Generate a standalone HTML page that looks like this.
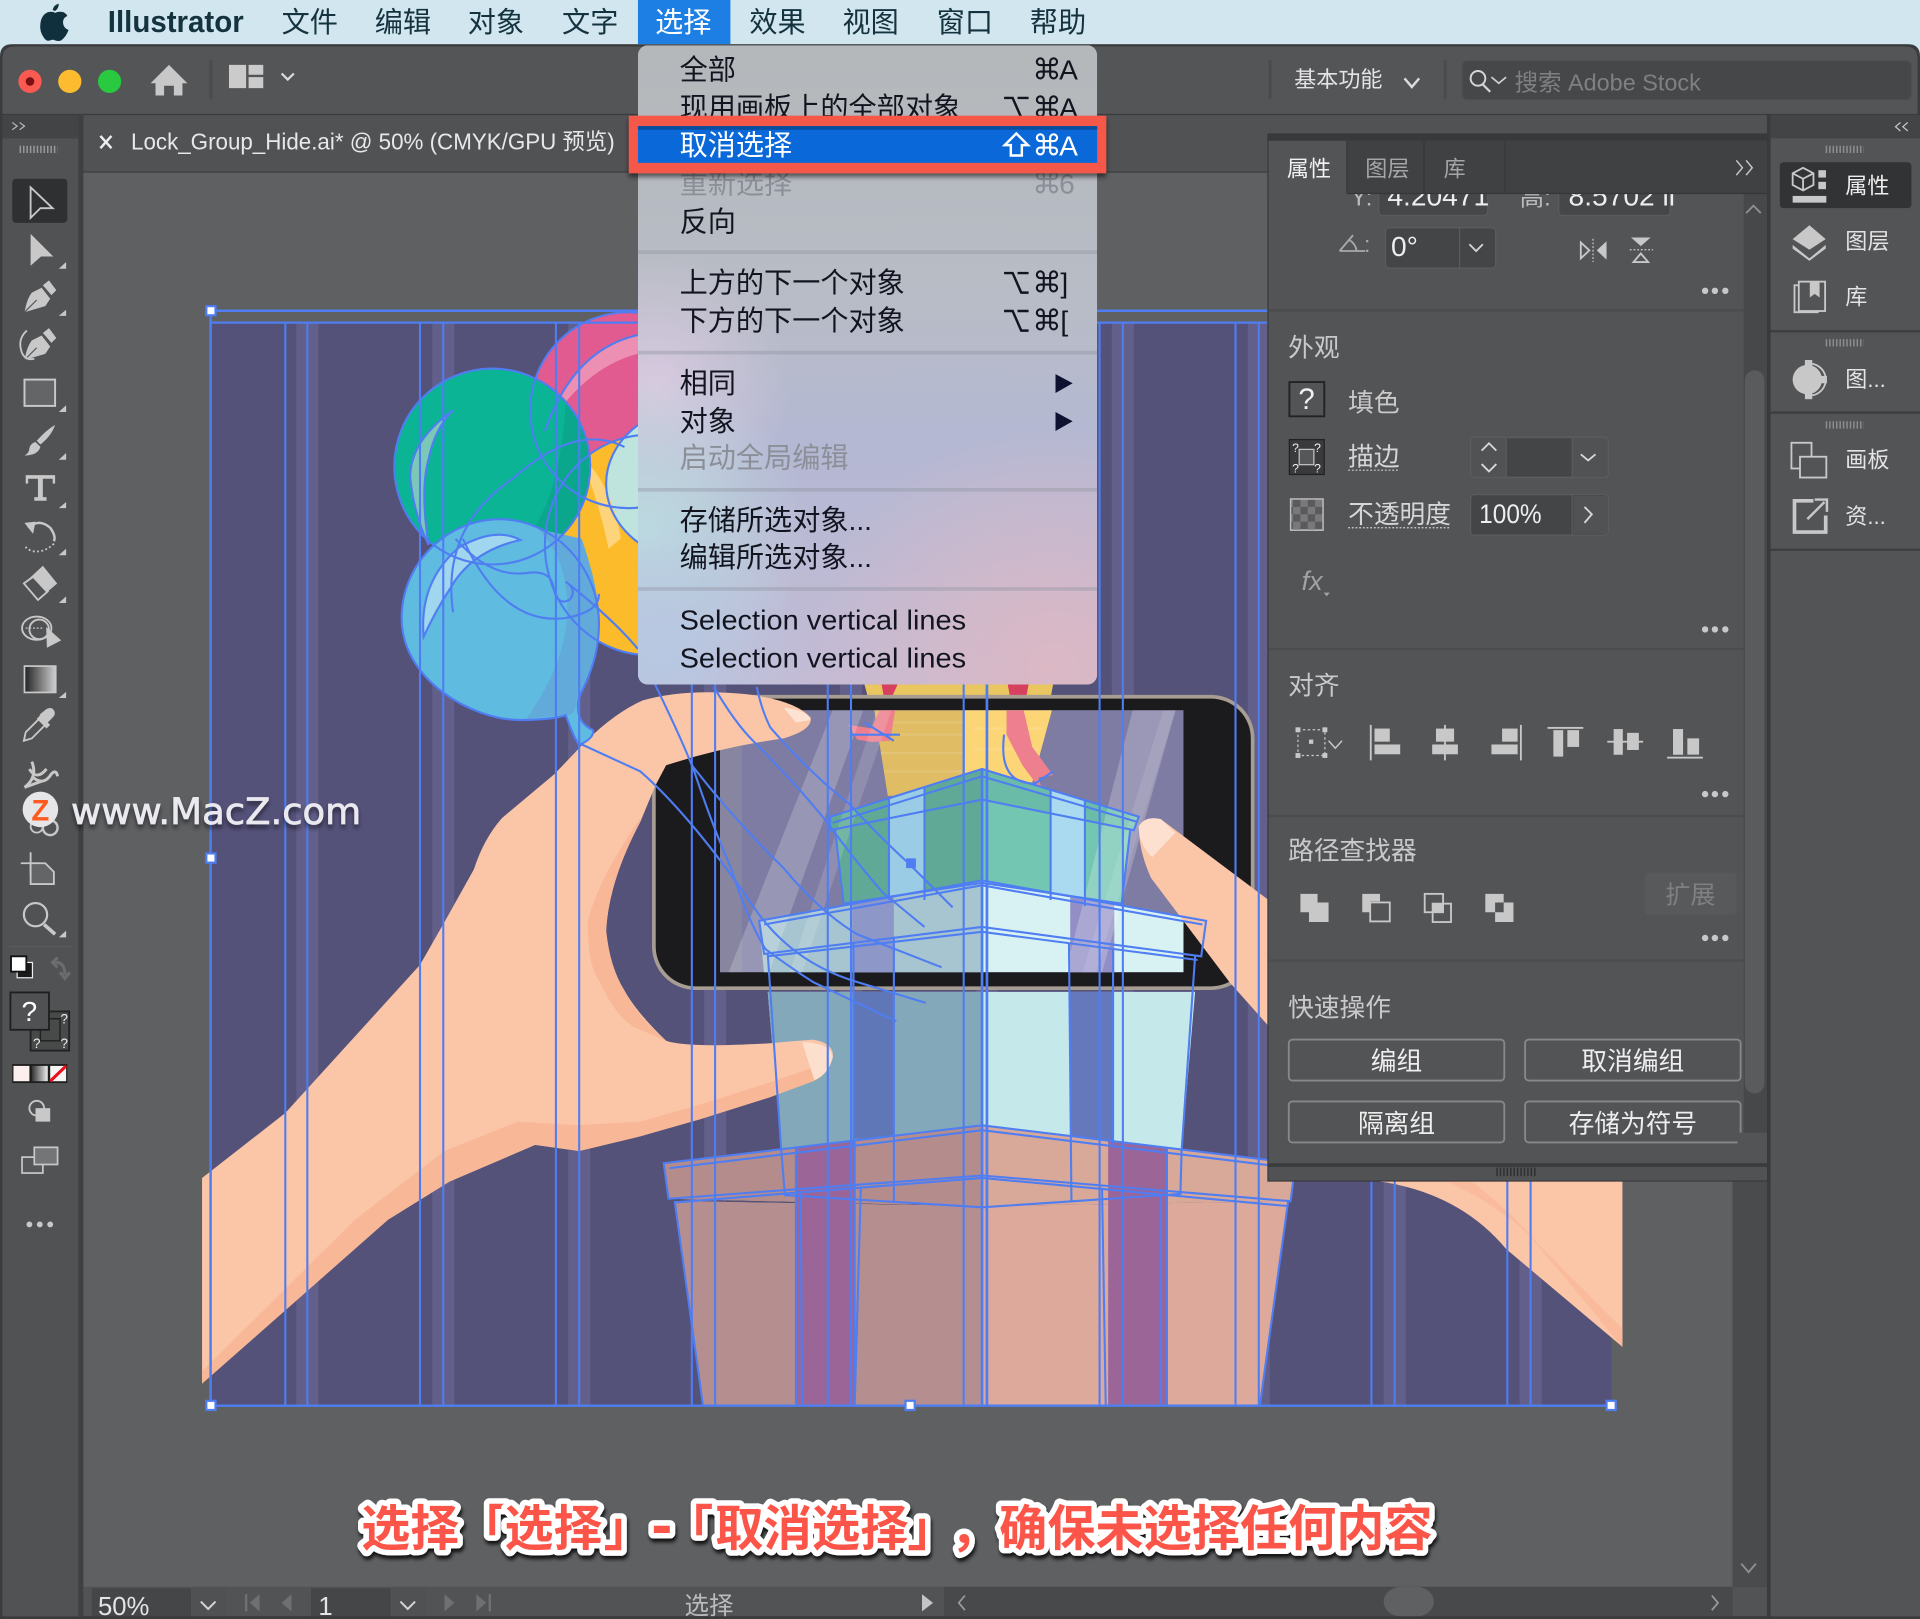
<!DOCTYPE html>
<html lang="zh">
<head>
<meta charset="utf-8">
<title>Illustrator</title>
<style>
html,body{margin:0;padding:0;background:#5f6062;width:1920px;height:1619px;overflow:hidden}
svg{display:block}
text{font-family:"Liberation Sans","Noto Sans CJK SC",sans-serif}
.m{font-size:23px;fill:#15323f}
.mi{font-size:23px;fill:#12151f}
.dis{font-size:23px;fill:#8b8f98}
.sym{font-family:"DejaVu Sans","Liberation Sans",sans-serif;font-size:24px;fill:#12151f}
.opt{fill:none;stroke:#12151f;stroke-width:2}
.h{font-size:21px;fill:#c9c9c9}
.l{font-size:21px;fill:#d6d6d6}
.b{font-size:21px;fill:#eeeeee;text-anchor:middle}
.d{font-size:18px;fill:#e4e4e4}
.ic{fill:#c8c8c8}
.st{fill:none;stroke:#c8c8c8;stroke-width:1.5}
.sel{fill:none;stroke:#4f7df2;stroke-width:1.7}
.cap{font-size:40px;font-weight:700;fill:#fb5548;stroke:#fff;stroke-width:9px;stroke-linejoin:round;paint-order:stroke;font-family:"Liberation Sans","Noto Sans CJK SC",sans-serif}
</style>
</head>
<body>
<svg xmlns="http://www.w3.org/2000/svg" width="1920" height="1619" viewBox="0 0 1568 1322.2" preserveAspectRatio="none">
<defs>
<linearGradient id="mg" x1="0" y1="0" x2="0" y2="1">
<stop offset="0" stop-color="#b4b8ba"/><stop offset=".4" stop-color="#b8bcc6"/><stop offset=".62" stop-color="#b4b8d3"/><stop offset="1" stop-color="#c4bbd5"/>
</linearGradient>
<radialGradient id="rp" gradientUnits="userSpaceOnUse" cx="535" cy="315" r="110"><stop offset="0" stop-color="#d8cadf"/><stop offset="1" stop-color="#d8cadf" stop-opacity="0"/></radialGradient>
<radialGradient id="rt" gradientUnits="userSpaceOnUse" cx="530" cy="435" r="130"><stop offset="0" stop-color="#bcdbe0"/><stop offset="1" stop-color="#bcdbe0" stop-opacity="0"/></radialGradient>
<radialGradient id="rb" gradientUnits="userSpaceOnUse" cx="860" cy="545" r="200"><stop offset="0" stop-color="#dcb8c4"/><stop offset="1" stop-color="#dcb8c4" stop-opacity="0"/></radialGradient>
<radialGradient id="rl" gradientUnits="userSpaceOnUse" cx="540" cy="535" r="120"><stop offset="0" stop-color="#b7c8e2"/><stop offset="1" stop-color="#b7c8e2" stop-opacity="0"/></radialGradient>
<linearGradient id="tg"><stop offset="0" stop-color="#222"/><stop offset="1" stop-color="#cfcfcf"/></linearGradient>
<linearGradient id="sg"><stop offset="0" stop-color="#333"/><stop offset="1" stop-color="#eee"/></linearGradient>
<clipPath id="art"><rect x="160" y="250" width="1165.500" height="898"/></clipPath>
<clipPath id="scr"><rect x="588" y="580" width="378.500" height="214"/></clipPath>
<clipPath id="menu"><rect x="521" y="37" width="375" height="522" rx="8"/></clipPath>
<filter id="sh" x="-5%" y="-20%" width="110%" height="150%"><feDropShadow dx="1" dy="3" stdDeviation="1.5" flood-color="#000" flood-opacity=".8"/></filter>
<filter id="sh2" x="-5%" y="-30%" width="110%" height="170%"><feDropShadow dx="0" dy="3" stdDeviation="2" flood-color="#000" flood-opacity=".55"/></filter>
<pattern id="chk" width="12" height="12" patternUnits="userSpaceOnUse"><rect width="12" height="12" fill="#79797b"/><rect width="6" height="6" fill="#5a5a5c"/><rect x="6" y="6" width="6" height="6" fill="#5a5a5c"/></pattern>
</defs>

<!-- backgrounds -->
<rect width="1568" height="1323" fill="#d1e6ef"/>
<path d="M0 46 Q0 36 10 36 H1558 Q1568 36 1568 46 V1323 H0Z" fill="#3a3b3d"/>
<path d="M2 48 Q2 38 12 38 H1556 Q1566 38 1566 48 V93 H2Z" fill="#545557"/>
<rect x="68" y="94" width="1375" height="47" fill="#515254"/>
<rect x="68" y="140" width="1375" height="1.500" fill="#3c3d3f"/>
<rect x="68" y="141" width="1347" height="1155" fill="#5f6062"/>
<!-- left tool panel -->
<rect x="2" y="94" width="62" height="1228" fill="#515254"/>
<rect x="2" y="94" width="62" height="19" fill="#434446"/>
<rect x="64" y="93" width="4" height="1230" fill="#3f4042"/>

<!-- artwork -->
<g clip-path="url(#art)">
<rect x="172" y="263" width="1144" height="885" fill="#55527a"/>
<g fill="#625f8a">
<rect x="242" y="263" width="18" height="885"/><rect x="353" y="263" width="18" height="885"/><rect x="464" y="263" width="18" height="885"/><rect x="575" y="263" width="18" height="885"/><rect x="686" y="263" width="18" height="885"/><rect x="797" y="263" width="18" height="885"/><rect x="908" y="263" width="18" height="885"/><rect x="1019" y="263" width="18" height="885"/><rect x="1130" y="263" width="18" height="885"/><rect x="1241" y="263" width="18" height="885"/>
</g>
<!-- balloons -->
<circle cx="513" cy="335" r="80" fill="#e25b90"/>
<path d="M445 352 Q470 280 530 272 L530 287 Q480 295 445 352Z" fill="#ec8fb2"/>
<ellipse cx="530" cy="445" rx="85" ry="90" fill="#fcbb2a"/>
<ellipse cx="575" cy="395" rx="80" ry="65" fill="#bfe3dd"/>
<path d="M473 371 Q500 395 507 440 L497 448 Q488 405 473 371Z" fill="#fdd47c"/>
<circle cx="402" cy="381" r="80" fill="#0ab495"/>
<path d="M482 381 A80 80 0 0 1 402 461 Q455 440 462 330 Q482 350 482 381Z" fill="#0aa78d"/>
<path d="M370 335 Q335 360 335 390 Q338 420 350 445 Q343 400 350 375 Q355 350 370 335Z" fill="#7cc8b8"/>
<path d="M408 424 C365 424 328 460 328 505 C328 555 385 588 425 588 C445 588 458 586 462 584 C466 595 470 605 473 608 C480 606 486 600 484 596 C470 590 470 575 475 565 C485 545 490 525 489 505 C487 460 450 424 408 424Z" fill="#5fbbe0"/>
<path d="M475 440 Q489 480 489 505 Q488 540 472 570 Q470 585 462 584 L430 587 Q470 530 462 480 Q460 455 440 432Z" fill="#62aada"/>
<path d="M346 520 Q342 475 375 447 Q405 430 425 441 Q385 450 368 480 Q355 500 346 520Z" fill="#a0d6ee"/>

<!-- right hand bottom -->
<path d="M1120 964 Q1190 972 1230 1020 L1325 1100 V950 H1120Z" fill="#fbc5a7"/>
<path d="M1180 964 Q1225 985 1250 1010 L1325 1100 V1085 L1260 1020 Q1230 985 1200 964Z" fill="#f9bb9c"/>

<!-- box top above phone -->
<path d="M706 559 H860 L858 570 H709Z" fill="#e9c65f"/>
<path d="M720 559 H733 L728 570 H722Z M823 559 H840 L838 570 H825Z" fill="#d8405f"/>

<!-- phone -->
<rect x="534" y="569" width="489" height="238" rx="34" fill="#1b1b1e" stroke="#a79d93" stroke-width="3"/>
<rect x="588" y="580" width="378.500" height="214" fill="#7e7ca2"/>
<g clip-path="url(#scr)">
<rect x="588" y="580" width="18" height="214" fill="#87859f"/>
<path d="M714 580 H859 L840 650 H725Z" fill="#e0bd65"/>
<path d="M787 580 H859 L840 650 H787Z" fill="#fcd676"/>
<path d="M714 590 H787 M716 600 H787 M719 615 H787 M722 630 H787 M795 595 H852 M795 612 H848" stroke="#fff" stroke-opacity=".1" stroke-width="2"/>
<path d="M693 592 L712 595 L718 580 L731 580 L727 605 L712 606 L700 604Z" fill="#ee7f8e"/>
<path d="M822 580 H836 L843 610 L860 633 L848 635 L852 648 L835 625 L822 600Z" fill="#ee7f8e"/>
<!-- green box -->
<path d="M682 678 L801 653 L923 678 L916 738 L801 721 L689 738Z" fill="#73c6b2"/>
<path d="M682 678 L801 653 V721 L689 738Z" fill="#5fa996"/>
<path d="M678 667 L802 628 L930 667 L926 678 L802 653 L678 678Z" fill="#6abba8"/>
<path d="M678 667 L802 628 V653 L678 678Z" fill="#5fa996"/>
<polygon points="726,652 755,643 755,735 726,738" fill="#9bcce6"/>
<polygon points="858,645 886,653 886,740 858,735" fill="#a9daf0"/>
<!-- lid 2 -->
<path d="M620 752 L802 719 L985 752 L981 794 H624Z" fill="#d8f2f4"/>
<path d="M620 752 L802 719 V794 H624Z" fill="#a7c5d0"/>
<polygon points="696,738 730,732 730,795 696,795" fill="#8d97c8"/>
<polygon points="874,733 910,739 910,795 874,795" fill="#938fc6"/>
<!-- light stripes -->
<polygon points="595,794 628,794 705,580 680,580" fill="#fff" opacity=".2"/>
<polygon points="870,794 900,794 960,580 925,580" fill="#fff" opacity=".22"/>
<polygon points="645,794 655,794 728,580 716,580" fill="#fff" opacity=".14"/>
<polygon points="884,794 895,794 960,580 950,580" fill="#fff" opacity=".1"/>
</g>
<!-- tower lower -->
<path d="M627 810 H976 L965 939 L802 919 L638 939Z" fill="#c5e9ea"/>
<path d="M627 810 H802 V919 L638 939Z" fill="#83a8ba"/>
<rect x="697" y="810" width="33" height="120" fill="#6077b7"/>
<rect x="874" y="810" width="35" height="122" fill="#6578bb"/>
<path d="M551 981 L802 985 L1052 981 L1029 1147 H574Z" fill="#dca99b"/>
<path d="M551 981 L802 985 V1147 H574Z" fill="#b58f8f"/>
<path d="M542 950 L802 919 L1058 950 L1054 981 L802 960 L546 979Z" fill="#d8a898"/>
<path d="M542 950 L802 919 V960 L546 979Z" fill="#b48c8c"/>
<path d="M546 979 L802 960 L1054 981 L802 985Z" fill="#d8a898"/>
<path d="M546 979 L802 960 V985Z" fill="#b48c8c"/>
<polygon points="650,937 698,931 698,1147 650,1147" fill="#9b6597"/>
<polygon points="905,931 953,937 953,1147 905,1147" fill="#9b6597"/>

<!-- left hand -->
<path d="M165 962 L233 909 L343 788 L363 753 L387 710 Q395 685 410 668 L453 632 L473 611 Q500 583 525 572 Q560 562 610 567 Q650 572 662 586 Q664 596 640 603 Q590 610 544 625 L535 642 L523 671 Q497 720 495 760 Q498 790 510 809 Q520 827 544 850 Q560 856 629 852 Q650 850 664 849 Q682 852 680 864 Q676 878 664 883 L629 896 L572 914 L523 928 L473 940 L437 935 L367 965 L317 996 L165 1130Z" fill="#fbc5a7"/>
<path d="M165 1130 L165 1120 L290 996 L363 940 L423 916 L473 919 L523 916 L572 902 L629 884 L664 872 L680 862 Q678 876 664 883 L629 896 L572 914 L523 928 L473 940 L437 935 L367 965 L317 996Z" fill="#f8b797"/>
<path d="M523 668 Q487 721 480 753 Q480 790 490 802 Q505 835 523 841 L544 850 Q520 830 510 809 Q498 790 495 760 Q497 720 523 671Z" fill="#f8b797"/>
<path d="M640 578 Q660 580 662 588 L650 590Z" fill="#fde3d4"/>
<path d="M655 851 Q680 852 680 864 Q676 878 665 882Z" fill="#fddfce"/>
<!-- right finger -->
<path d="M930 675 Q935 666 948 669 L1036 735 V838 L1004 802 L940 717 Q930 695 930 675Z" fill="#fbc5a7"/>
<path d="M930 675 Q935 666 948 669 L960 680 L941 700 Q930 690 930 675Z" fill="#fde0cf"/>

<!-- vector outlines -->
<g class="sel">
<path d="M172 263.500 H1316" stroke-width="1.800"/>
<path d="M233 263V1148M251 263V1148M343 263V1148M362 263V1148M454 263V1148M473 263V1148M565 263V1148M584 263V1148M676 263V1148M695 263V1148M787 263V1148M898 263V1148M917 263V1148M1009 263V1148M1028 263V1148M1120 263V1148M1139 263V1148M1231 263V1148M1250 263V1148"/>
<circle cx="513" cy="335" r="80"/><circle cx="402" cy="381" r="80"/>
<ellipse cx="530" cy="445" rx="85" ry="90"/>
<ellipse cx="575" cy="395" rx="80" ry="65"/>
<path d="M370 335 Q335 360 335 390 Q338 420 350 445 Q343 400 350 375 Q355 350 370 335Z"/>
<path d="M408 424 C365 424 328 460 328 505 C328 555 385 588 425 588 C445 588 458 586 462 584 C466 595 470 605 473 608 C480 606 486 600 484 596 C470 590 470 575 475 565 C485 545 490 525 489 505 C487 460 450 424 408 424Z"/>
<path d="M346 520 Q342 475 375 447 Q405 430 425 441 Q385 450 368 480 Q355 500 346 520Z"/>
<path d="M370 500 Q360 430 420 390 Q470 345 510 365"/>
<path d="M372 440 Q400 472 430 468 Q450 465 452 480 Q455 495 465 490 Q472 482 462 475 Q500 505 521 530"/>
<path d="M378 440 Q410 510 460 505 Q490 500 489 485"/>
<path d="M445 352 Q470 280 530 272"/>
<path d="M473 607 L523 630 Q565 667 615 740 Q646 786 700 802 L756 819"/>
<path d="M533 555 Q555 600 565 625 Q600 670 640 709 Q670 745 700 763 L769 790"/>
<path d="M583 561 Q600 590 615 605 Q650 640 675 671 Q700 705 721 729 L755 757"/>
<path d="M618 561 Q622 580 629 594 Q660 630 694 657 Q720 685 742 705 L778 741"/>
<path d="M565 624 Q580 670 597 709 Q610 750 625 775 Q645 790 664 802 L732 834"/>
<path d="M678 667 L802 628 L930 667 L926 678 L802 653 L678 678Z"/>
<path d="M680 672 L802 634 L928 671"/>
<path d="M682 678 L689 738 M923 678 L916 738"/>
<path d="M726 652 V735 M755 643 V735 M858 645 V735 M886 653 V740"/>
<path d="M620 752 L802 719 L985 752 L981 781 L802 757 L624 779Z"/>
<path d="M624 755 L802 723 L982 755 M627 781 L802 761 L978 784"/>
<path d="M689 738 L802 721 L916 738"/>
<path d="M627 779 L638 939 M976 781 L965 939"/>
<path d="M697 770 V937 M730 765 L730 981 M873 770 L875 981 M909 775 L909 935"/>
<path d="M542 950 L802 919 L1058 950 L1054 981 L802 960 L546 979Z"/>
<path d="M547 954 L802 923 L1056 954 M551 982 L802 962 L1052 985"/>
<path d="M551 981 L574 1147 M1052 981 L1029 1147"/>
<path d="M638 939 L641 976 L802 986 L877 981 L964 975 L965 939"/>
<path d="M650 937 V1147 M654 975 L655 1147 M698 931 V1147 M703 970 L698 1147 M900 970 L903 1147 M948 975 V1147 M953 937 V1147"/>
<path d="M787 580 V640"/>
<path d="M802 628 V1148 M806 263 V1148" stroke-width="2.200"/>
<path d="M694 600 L735 600 M706 590 L730 605 M820 600 Q815 640 845 640 L860 630"/>
</g>
</g>
<path d="M172 253.800 H1316 M172 253.800 V1148 M172 1148 H1316" fill="none" stroke="#4f7df2" stroke-width="2"/>
<g fill="#fff" stroke="#4f7df2" stroke-width="1.800">
<rect x="168.500" y="250" width="7.500" height="7.500"/><rect x="168.500" y="697" width="7.500" height="7.500"/><rect x="168.500" y="1144" width="7.500" height="7.500"/><rect x="739.500" y="1144" width="7.500" height="7.500"/><rect x="1312" y="1144" width="7.500" height="7.500"/>
</g>
<rect x="740" y="701" width="8" height="8" fill="#4f7df2"/>

<!-- right side dark scrollbar -->
<rect x="1415" y="141" width="28" height="1155" fill="#4a4b4d"/>
<path d="M1422 1277 L1428 1284 L1434 1277" class="st" style="stroke:#8f9092"/>
<!-- bottom bar -->
<rect x="68" y="1296" width="1375" height="24" fill="#525355"/>
<rect x="771" y="1296" width="644" height="24" fill="#48494b"/>
<rect x="75" y="1297" width="81" height="23" fill="#454648"/>
<rect x="157" y="1297" width="28" height="23" fill="#505153"/>
<rect x="254" y="1297" width="65" height="23" fill="#454648"/>
<rect x="320" y="1297" width="28" height="23" fill="#505153"/>
<rect x="1130" y="1296" width="41" height="24" rx="14" fill="#5f6062"/>
<text x="80" y="1319" font-size="21" fill="#e4e4e4">50%</text>
<path d="M164 1308 L170 1314 L176 1308M327 1308 L333 1314 L339 1308" fill="none" stroke="#d5d5d5" stroke-width="1.600"/>
<text x="260" y="1319" font-size="21" fill="#e4e4e4">1</text>
<g fill="#6f7072">
<rect x="200" y="1302" width="2" height="14"/><polygon points="212,1302 212,1316 204,1309"/><polygon points="238,1302 238,1316 230,1309"/>
<polygon points="363,1302 363,1316 371,1309"/><polygon points="389,1302 389,1316 397,1309"/><rect x="399" y="1302" width="2" height="14"/>
</g>
<text x="579" y="1318" font-size="20" fill="#bcbcbc" text-anchor="middle">选择</text>
<polygon points="753,1302 753,1316 762,1309" fill="#c5c5c5"/>
<path d="M788 1303 L783 1309 L788 1315M1398 1303 L1403 1309 L1398 1315" fill="none" stroke="#9a9b9d" stroke-width="1.400"/>
<rect x="0" y="1320" width="1568" height="3" fill="#3a3b3d"/>

<!-- top toolbar -->
<circle cx="24.500" cy="66.500" r="9.500" fill="#fb5a52"/><circle cx="24.500" cy="66.500" r="3.500" fill="#7a1010"/>
<circle cx="57" cy="66.500" r="9.500" fill="#fdbb30"/><circle cx="89.500" cy="66.500" r="9.500" fill="#29c940"/>
<path d="M138 53 L153 68 L149 68 V78 H142 V70 H134 V78 H127 V68 L123 68Z" fill="#c8c8c8"/>
<rect x="171" y="49" width="2.500" height="32" fill="#4a4b4d"/>
<path d="M187 53 H201 V72 H187Z M203 53 H215 V61 H203Z M203 63 H215 V72 H203Z" fill="#cbcbcb"/>
<path d="M230 60 L235 65 L240 60" fill="none" stroke="#dcdcdc" stroke-width="1.800"/>
<rect x="1036" y="49" width="2.500" height="32" fill="#4a4b4d"/><rect x="1179" y="49" width="2.500" height="32" fill="#4a4b4d"/>
<text x="1057" y="71" class="d">基本功能</text>
<path d="M1147 64 L1153 71 L1159 64" fill="none" stroke="#dcdcdc" stroke-width="2"/>
<rect x="1194" y="49.500" width="367" height="32" rx="4" fill="#464749" stroke="#4f5052"/>
<circle cx="1207" cy="64" r="6" fill="none" stroke="#d5d5d5" stroke-width="1.600"/><path d="M1211 69 L1217 75" stroke="#d5d5d5" stroke-width="1.800"/>
<path d="M1218 63 L1224 68 L1230 63" fill="none" stroke="#d0d0d0" stroke-width="1.400"/>
<text x="1237" y="74" font-size="19" fill="#7f8082" textLength="152" lengthAdjust="spacingAndGlyphs">搜索 Adobe Stock</text>

<!-- tab -->
<path d="M82 111 L91 121 M91 111 L82 121" stroke="#eee" stroke-width="2"/>
<text x="107" y="122" font-size="18.500" fill="#e8e8e8" textLength="395" lengthAdjust="spacingAndGlyphs">Lock_Group_Hide.ai* @ 50% (CMYK/GPU 预览)</text>

<!-- left tools -->
<path d="M10 106 L14 103 L10 100 M16 106 L20 103 L16 100" fill="none" stroke="#b9b9b9"/>
<path d="M16 122 H47" stroke="#9a9a9a" stroke-width="6" stroke-dasharray="1.200 1.600"/>
<rect x="10" y="146" width="45" height="36" rx="3" fill="#2f3032"/>
<path d="M25 153 L43 170 L33 170 L25 178Z" class="st"/>
<path d="M25 191 L43.500 209.500 L33.500 209.500 L25 217Z" class="ic"/>
<path d="M20 255 Q22 244 26 239 L34 235 L41 244 L37 250 Q30 252 20 255Z" class="ic"/><path d="M35 233 L40 229 L46 237 L42 241Z" class="ic"/><path d="M20 255 L30 245" stroke="#535456"/>
<g transform="translate(0,39)"><path d="M20 255 Q22 244 26 239 L34 235 L41 244 L37 250 Q30 252 20 255Z" class="ic"/><path d="M35 233 L40 229 L46 237 L42 241Z" class="ic"/><path d="M20 255 L30 245" stroke="#535456"/></g>
<path d="M22 270 Q15 276 17 285 Q19 295 28 293" class="st"/>
<rect x="20" y="310" width="25" height="21.500" fill="#646567" stroke="#c8c8c8" stroke-width="1.600"/>
<path d="M45 347 Q42 356 33 363 L30 360 Q38 351 45 347Z" class="ic"/><path d="M29 361 L33 365 Q31 372 20 372 Q24 370 24 366 Q25 362 29 361Z" class="ic"/>
<path d="M21 388 H45 V395 H43 V391 H35 V406 H38 V409 H28 V406 H31 V391 H23 V395 H21Z" class="ic"/>
<path d="M23 431 Q32 423 41 431 Q46 438 44 442" fill="none" stroke="#c8c8c8" stroke-width="2"/><polygon points="20,427 29,426 27,436" class="ic"/>
<path d="M44 444 Q36 452 26 450 Q21 448 20 445" class="st" stroke-dasharray="1.500 2"/>
<path d="M19.500 476.500 L35 462 L46.700 476.500 L38 484 L27 472Z" class="ic"/><path d="M19.500 476.500 L31 490 L39 483 L27 471Z" class="st"/>
<ellipse cx="30" cy="513" rx="12" ry="9.500" class="st"/><circle cx="32" cy="514" r="8" class="st" stroke-width="1"/><path d="M21 513 H36" stroke="#c8c8c8" stroke-dasharray="1.500 1.500"/><polygon points="37.700,512 50,523 38.300,529" class="ic"/>
<rect x="20" y="544" width="25.500" height="21.500" fill="url(#tg)" stroke="#c8c8c8" stroke-width="1.400"/>
<path d="M19.500 605 L21 598 L33 586 L38 591 L26 603Z" class="st"/><path d="M33 583 L38 579 Q42 577 44 580 Q46 583 43 586 L39 590 L41 592 L38 595 L30 587 L32 585Z" class="ic"/>
<path d="M20 643 Q31 635 26 622 M27 635 Q36 642 42 632 Q46 628 47 634 M24 628 Q30 638 38 628 M20 643 L34 638" fill="none" stroke="#c8c8c8" stroke-width="2.400"/>
<circle cx="41" cy="676" r="6" class="st" style="stroke-width:2"/><circle cx="30" cy="675" r="5" class="st"/>
<path d="M17 705 H33 M25 696 V714" class="st"/><path d="M25 705 H37 L44 712 V722 H25Z" fill="#646567" stroke="#c8c8c8" stroke-width="1.500"/>
<circle cx="29" cy="747" r="9.500" class="st" style="stroke-width:1.800"/><path d="M36 755 L45 763" stroke="#c8c8c8" stroke-width="3"/>
<g class="ic"><polygon points="54,214 54,219.500 48,219.500"/><polygon points="54,253 54,258 48,258"/><polygon points="54,331 54,336.500 48,336.500"/><polygon points="54,370 54,375.500 48,375.500"/><polygon points="54,410 54,415 48,415"/><polygon points="54,448 54,453.500 48,453.500"/><polygon points="54,487 54,492.500 48,492.500"/><polygon points="54,565 54,570 48,570"/><polygon points="54,760 54,765.500 48,765.500"/></g>
<path d="M8 773 H58" stroke="#5a5b5d"/>
<rect x="14" y="786" width="12.500" height="12.500" fill="#1a1a1a" stroke="#eee"/><rect x="9" y="781" width="12.500" height="12.500" fill="#fff" stroke="#111" stroke-width="1.500"/>
<path d="M44 786 Q53 785 53 796 M47 782 L43 786 L47 790 M49 794 L53 799 L57 794" fill="none" stroke="#6b6c6e" stroke-width="2.600"/>
<rect x="25" y="826" width="31.500" height="32" fill="#484949" stroke="#222" stroke-width="1.500"/>
<rect x="33" y="832" width="16" height="18" fill="none" stroke="#222" stroke-width="1.200"/>
<rect x="8.500" y="810.500" width="31.500" height="30.500" fill="#505153" stroke="#1f1f1f" stroke-width="1.500"/>
<text x="24" y="834" font-size="23" fill="#fff" text-anchor="middle">?</text>
<text x="52.500" y="836" font-size="11" fill="#eee" text-anchor="middle">?</text><text x="30" y="856" font-size="11" fill="#eee" text-anchor="middle">?</text><text x="52.500" y="856" font-size="11" fill="#eee" text-anchor="middle">?</text>
<rect x="10" y="869" width="45" height="15.500" fill="#1e1e1e"/>
<rect x="11" y="870.500" width="13" height="12.500" fill="#fbf0ee"/><rect x="26" y="870.500" width="13" height="12.500" fill="url(#sg)"/><rect x="41" y="870.500" width="13" height="12.500" fill="#f5f5f5"/>
<path d="M41 883 L54 870.500" stroke="#e8101a" stroke-width="2.500"/>
<circle cx="30" cy="905" r="6" class="st"/><rect x="29" y="905" width="12" height="11" class="ic"/>
<rect x="18" y="945" width="17" height="13" fill="#56575a" stroke="#c8c8c8" stroke-width="1.400"/><rect x="28" y="937" width="19" height="14" fill="#747577" stroke="#c8c8c8" stroke-width="1.400"/>
<circle cx="24" cy="1000" r="2.400" fill="#c8c8c8"/><circle cx="32.500" cy="1000" r="2.400" fill="#c8c8c8"/><circle cx="41" cy="1000" r="2.400" fill="#c8c8c8"/>

<!-- watermark -->
<circle cx="33" cy="661" r="14.500" fill="#e6e6e8"/>
<text x="33" y="670" font-size="24" font-weight="700" fill="#ff5a20" text-anchor="middle">Z</text>
<text x="58" y="673" font-size="30" fill="#e9e9ef" stroke="#e9e9ef" stroke-width=".6" style="font-family:'DejaVu Sans',sans-serif" textLength="237" lengthAdjust="spacingAndGlyphs" filter="url(#sh2)">www.MacZ.com</text>

<!-- right dock -->
<rect x="1443" y="93" width="3" height="1230" fill="#3a3b3d"/>
<rect x="1446" y="94" width="122" height="1226" fill="#535456"/>
<rect x="1446" y="94" width="122" height="19" fill="#434446"/>
<path d="M1552 100 L1548 103.500 L1552 107 M1558 100 L1554 103.500 L1558 107" fill="none" stroke="#c8c8c8"/>
<path d="M1491 122 H1522M1491 280 H1522M1491 347 H1522" stroke="#8e8e8e" stroke-width="6" stroke-dasharray="1.200 1.600"/>
<rect x="1453.500" y="132.500" width="107.500" height="37.500" rx="3" fill="#323335"/>
<path d="M1472.500 137 L1481 141.500 V151 L1472.500 155.500 L1464 151 V141.500Z M1464 141.500 L1472.500 146 L1481 141.500 M1472.500 146 V155.500" class="st"/>
<rect x="1485" y="139" width="6.200" height="6" class="ic"/><rect x="1485" y="148.500" width="6.200" height="6" class="ic"/><rect x="1464" y="160" width="27.500" height="5.500" class="ic"/>
<text x="1507" y="158" font-size="18" fill="#eee">属性</text>
<path d="M1477.700 184 L1491 195.300 L1477.700 204 L1464 195.300Z" class="ic"/><path d="M1464 200 L1477.700 211 L1491 200 L1491 203 L1477.700 213 L1464 203Z" class="ic"/>
<text x="1507" y="203.500" font-size="18" fill="#e4e4e4">图层</text>
<rect x="1465.500" y="233" width="19" height="22" class="st"/><rect x="1469" y="230" width="21.500" height="24" fill="#535456" stroke="#c8c8c8" stroke-width="1.500"/><path d="M1478 230 V243 L1482 240 L1486 243 V230Z" class="ic"/>
<text x="1507" y="248.500" font-size="18" fill="#e4e4e4">库</text>
<path d="M1446 270.500 H1568M1446 337 H1568M1446 449 H1568" stroke="#3e3f41" stroke-width="2"/>
<circle cx="1476" cy="310" r="12" class="ic"/><path d="M1478 297 A13 13 0 0 1 1478 323" class="st"/><rect x="1474" y="294" width="6" height="6" class="ic"/><rect x="1474" y="320" width="6" height="6" class="ic"/><rect x="1487" y="307" width="5" height="6" class="ic"/>
<text x="1507" y="316" font-size="18" fill="#e4e4e4">图...</text>
<rect x="1463" y="361.600" width="16.400" height="21" class="st"/><rect x="1470" y="373" width="21.500" height="17" fill="#535456" stroke="#c8c8c8" stroke-width="1.500"/>
<text x="1507" y="382" font-size="18" fill="#e4e4e4">画板</text>
<path d="M1481 409 H1465.500 V434.500 H1491 V421" fill="none" stroke="#c8c8c8" stroke-width="3"/><path d="M1476 424 L1490 410 M1482 408 H1492 V418" fill="none" stroke="#c8c8c8" stroke-width="2"/>
<text x="1507" y="428" font-size="18" fill="#e4e4e4">资...</text>

<!-- properties panel -->
<rect x="1035" y="109" width="409" height="856" fill="#38393b"/>
<rect x="1036" y="115" width="407" height="849" fill="#535456"/>
<rect x="1424" y="158" width="19" height="770" fill="#47484a"/>
<rect x="1425" y="302.500" width="16" height="590.500" rx="8" fill="#5a5b5d"/>
<path d="M1426 174 L1432 168 L1438 174" fill="none" stroke="#8e8f91" stroke-width="1.500"/>
<!-- clipped fields -->
<rect x="1126" y="150" width="89" height="26" rx="3" fill="#464749" stroke="#5a5b5d"/><rect x="1273" y="150" width="91" height="26" rx="3" fill="#464749" stroke="#5a5b5d"/>
<text x="1133" y="168" font-size="23" fill="#eee">4.20471</text><text x="1281" y="168" font-size="23" fill="#eee">8.5702 ii</text>
<text x="1103" y="168" font-size="20" fill="#bbb">Y:</text><text x="1241" y="168" font-size="20" fill="#bbb">高:</text>
<!-- tabs -->
<rect x="1036" y="115" width="407" height="43" fill="#404143"/>
<rect x="1036" y="115" width="64" height="45" fill="#535456"/>
<path d="M1100 115 V158 M1163 115 V158 M1229 115 V158" stroke="#36373a"/>
<path d="M1100 158 H1443" stroke="#36373a"/>
<text x="1051" y="144" font-size="18" fill="#f2f2f2">属性</text>
<text x="1115" y="144" font-size="18" fill="#a6a6a6">图层</text>
<text x="1179" y="144" font-size="18" fill="#a6a6a6">库</text>
<path d="M1418 131 L1423 137 L1418 143 M1426 131 L1431 137 L1426 143" fill="none" stroke="#c4c4c4" stroke-width="1.200"/>

<path d="M1094 205 L1105 192 M1094 205 H1115 M1102 196 Q1107 199 1108 205" fill="none" stroke="#a9a9a9" stroke-width="1.500"/><text x="1114" y="206" font-size="18" fill="#aaa">:</text>
<rect x="1131.500" y="186" width="90" height="33" rx="3" fill="#444547" stroke="#5b5c5e"/><path d="M1192 186 V219" stroke="#5b5c5e"/>
<text x="1136" y="209" font-size="23" fill="#eee">0°</text>
<path d="M1200 199.500 L1205.500 205 L1211 199.500" fill="none" stroke="#d5d5d5" stroke-width="1.500"/>
<path d="M1291 198 V211 L1298 204.500Z" class="st"/><path d="M1301 195 V214" stroke="#c8c8c8" stroke-dasharray="1.500 1.500"/><polygon points="1312,197 1312,212 1304,204.500" class="ic"/>
<polygon points="1332,194 1348,194 1340,201" class="ic"/><path d="M1331 204 H1350" stroke="#c8c8c8" stroke-dasharray="1.500 1.500"/><path d="M1334 214 H1346 L1340 207Z" class="st"/>
<g class="ic"><circle cx="1392.500" cy="237.500" r="2.600"/><circle cx="1400.500" cy="237.500" r="2.600"/><circle cx="1409" cy="237.500" r="2.600"/>
<circle cx="1392.500" cy="514" r="2.600"/><circle cx="1400.500" cy="514" r="2.600"/><circle cx="1409" cy="514" r="2.600"/>
<circle cx="1392.500" cy="648.500" r="2.600"/><circle cx="1400.500" cy="648.500" r="2.600"/><circle cx="1409" cy="648.500" r="2.600"/>
<circle cx="1392.500" cy="766" r="2.600"/><circle cx="1400.500" cy="766" r="2.600"/><circle cx="1409" cy="766" r="2.600"/></g>
<path d="M1036 253.500 H1424 M1036 530 H1424 M1036 666.500 H1424 M1036 784.500 H1424" stroke="#4b4c4e" stroke-width="2"/>

<text x="1052" y="291" class="h">外观</text>
<rect x="1053" y="312" width="28.500" height="28" fill="none" stroke="#222" stroke-width="1.500"/>
<text x="1067" y="334" font-size="24" fill="#f0f0f0" text-anchor="middle">?</text>
<text x="1101" y="336" class="h">填色</text>
<rect x="1053" y="359" width="28.500" height="28.500" fill="#3a3a3c" stroke="#222"/>
<rect x="1061" y="367" width="12" height="12.500" fill="#565759" stroke="#c5c5c5" stroke-width="1"/>
<g font-size="10" fill="#eee" text-anchor="middle"><text x="1058" y="369">?</text><text x="1076" y="369">?</text><text x="1058" y="386">?</text><text x="1076" y="386">?</text></g>
<text x="1101" y="380" class="l">描边</text><path d="M1101 384 H1143" stroke="#d0d0d0" stroke-dasharray="1.500 1.500"/>
<rect x="1201" y="357" width="112.500" height="33" rx="3" fill="#515254" stroke="#5b5c5e"/><rect x="1230" y="358" width="54" height="31" fill="#444547"/><path d="M1230 357 V390 M1284 357 V390" stroke="#5b5c5e"/>
<path d="M1210 368 L1216 362 L1222 368 M1210 379 L1216 385 L1222 379 M1291 371 L1297 376 L1303 371" fill="none" stroke="#d8d8d8" stroke-width="1.500"/>
<rect x="1054" y="407.500" width="26.500" height="25.500" fill="url(#chk)" stroke="#bdbdbd" stroke-width="1.200"/>
<text x="1101" y="427" class="l">不透明度</text><path d="M1101 431 H1185" stroke="#d0d0d0" stroke-dasharray="1.500 1.500"/>
<rect x="1201" y="404" width="112.500" height="33" rx="3" fill="#444547" stroke="#5b5c5e"/><path d="M1284 404 V437" stroke="#5b5c5e"/><rect x="1285" y="405" width="28" height="31" fill="#515254"/>
<text x="1208" y="427" font-size="22" fill="#eee" textLength="51" lengthAdjust="spacingAndGlyphs">100%</text>
<path d="M1294 414 L1300 420 L1294 427" fill="none" stroke="#d8d8d8" stroke-width="1.500"/>
<text x="1063" y="482" font-size="22" font-style="italic" fill="#a2a2a2">fx</text><path d="M1081 484 L1086 484 L1083.500 487Z" fill="#a2a2a2"/>

<text x="1052" y="567" class="h">对齐</text>
<rect x="1060" y="596" width="22" height="21" fill="none" stroke="#c8c8c8" stroke-dasharray="2 2"/><rect x="1069" y="604" width="3.500" height="3.500" class="ic"/>
<g class="ic"><rect x="1058" y="594" width="4" height="4"/><rect x="1080" y="594" width="4" height="4"/><rect x="1058" y="615" width="4" height="4"/><rect x="1080" y="615" width="4" height="4"/></g>
<path d="M1085 605 L1090.500 611 L1096 605" fill="none" stroke="#c8c8c8" stroke-width="1.200"/>
<g class="ic">
<rect x="1118.700" y="592" width="1.500" height="29"/><rect x="1122.500" y="595" width="12.500" height="10.700"/><rect x="1122.500" y="608" width="21" height="8"/>
<rect x="1179.300" y="592" width="1.500" height="29"/><rect x="1172.700" y="595" width="14.800" height="10.700"/><rect x="1169.600" y="608" width="21" height="8"/>
<rect x="1241.300" y="592" width="1.500" height="29"/><rect x="1226.700" y="595" width="12.700" height="10.700"/><rect x="1218" y="608" width="21.400" height="8"/>
<rect x="1263.800" y="593.700" width="29.200" height="1.500"/><rect x="1268.600" y="596.300" width="8" height="21.600"/><rect x="1280" y="596.300" width="9.600" height="13.700"/>
<rect x="1312.600" y="605" width="29.300" height="1.500"/><rect x="1317.800" y="595.400" width="7.500" height="21"/><rect x="1328.800" y="598.500" width="9.600" height="14"/>
<rect x="1361.500" y="618" width="29.200" height="1.500"/><rect x="1366.300" y="595.400" width="8.200" height="21"/><rect x="1378" y="603" width="9.600" height="13.300"/>
</g>

<text x="1052" y="702" class="h">路径查找器</text>
<path d="M1062 730 H1076 V737 H1085 V753 H1069 V745 H1062Z" class="ic"/>
<path d="M1112.500 730 H1127 V736 H1119 V745 H1112.500Z" class="ic"/><rect x="1119" y="737" width="16" height="15.500" class="st"/>
<rect x="1163.500" y="730" width="15" height="15" class="st"/><rect x="1170" y="738" width="15" height="15" class="st"/><rect x="1170" y="738" width="8.500" height="7" class="ic"/>
<path d="M1213 730 H1228 V737 H1236 V753 H1221 V745 H1213Z M1221 737 V745 H1228 V737Z" fill-rule="evenodd" class="ic"/>
<rect x="1343.500" y="712.500" width="74.500" height="34.500" rx="3" fill="#58595b"/>
<text x="1380.500" y="738" font-size="20.500" fill="#7f8082" text-anchor="middle">扩展</text>

<text x="1052" y="830" class="h">快速操作</text>
<g fill="none" stroke="#87888a" stroke-width="1.500">
<rect x="1052.500" y="849" width="176" height="33.500" rx="3"/><rect x="1245.500" y="849" width="176" height="33.500" rx="3"/>
<rect x="1052.500" y="899.500" width="176" height="33.500" rx="3"/><rect x="1245.500" y="899.500" width="176" height="33.500" rx="3"/>
</g>
<text x="1140.500" y="874" class="b">编组</text><text x="1333.500" y="874" class="b">取消编组</text>
<text x="1140.500" y="925" class="b">隔离组</text><text x="1333.500" y="925" class="b">存储为符号</text>
<rect x="1419" y="925" width="24" height="25" fill="#535456"/>
<rect x="1036" y="950" width="407" height="3" fill="#3a3b3d"/>
<rect x="1036" y="953" width="407" height="10" fill="#515254"/>
<path d="M1222 957 H1254" stroke="#2f3032" stroke-width="7" stroke-dasharray="1.200 1.600"/>

<!-- top menubar -->
<rect x="0" y="0" width="1568" height="36" fill="#d1e6ef"/>
<path d="M43 8 Q44 4 48 3 Q48 7 45 9 Q44 9 43 8Z M39 10 Q43 9 45 10.500 Q48 9 52 10 Q54 11 55 13 Q51 15 51.500 19 Q52 23 56 24.500 Q54 30 50 33 Q48 34 45 33 Q43 32 41 33 Q38 34 36 31 Q32 26 33 19 Q34 12 39 10Z" fill="#11303d"/>
<text x="88" y="26" font-size="25" font-weight="700" fill="#15323f" textLength="111" lengthAdjust="spacingAndGlyphs">Illustrator</text>
<text x="230" y="26" class="m">文件</text><text x="306" y="26" class="m">编辑</text><text x="382" y="26" class="m">对象</text><text x="459" y="26" class="m">文字</text>
<rect x="521" y="0" width="75.500" height="36" fill="#1d7fe3"/>
<text x="535" y="26" class="m" style="fill:#fff">选择</text>
<text x="612" y="26" class="m">效果</text><text x="688" y="26" class="m">视图</text><text x="765" y="26" class="m">窗口</text><text x="841" y="26" class="m">帮助</text>

<!-- dropdown menu -->
<g clip-path="url(#menu)">
<rect x="521" y="37" width="375" height="522" fill="url(#mg)"/>
<rect x="521" y="37" width="375" height="522" fill="url(#rp)"/>
<rect x="521" y="37" width="375" height="522" fill="url(#rt)"/>
<rect x="521" y="37" width="375" height="522" fill="url(#rb)"/>
<rect x="521" y="37" width="375" height="522" fill="url(#rl)"/>
<path d="M521 206 H896 M521 288 H896 M521 400 H896 M521 481 H896" stroke="#8f93a0" stroke-opacity=".4" stroke-width="3"/>
<text x="555" y="65" class="mi">全部</text>
<text x="843" y="65" class="sym">⌘</text><text x="865" y="65" class="mi">A</text>
<text x="555" y="96" class="mi">现用画板上的全部对象</text>
<path d="M820 80 H827 L834 96 H840 M831 80 H840" class="opt"/><text x="843" y="96" class="sym">⌘</text><text x="865" y="96" class="mi">A</text>
<text x="555" y="158" class="dis">重新选择</text>
<text x="843" y="158" class="sym" style="fill:#8b8f98">⌘</text><text x="865" y="158" class="dis">6</text>
<text x="555" y="189" class="mi">反向</text>
<text x="555" y="239" class="mi">上方的下一个对象</text>
<path d="M820 223 H827 L834 239 H840 M831 223 H840" class="opt"/><text x="843" y="239" class="sym">⌘</text><text x="866" y="239" class="mi">]</text>
<text x="555" y="270" class="mi">下方的下一个对象</text>
<path d="M820 254 H827 L834 270 H840 M831 254 H840" class="opt"/><text x="843" y="270" class="sym">⌘</text><text x="866" y="270" class="mi">[</text>
<text x="555" y="321" class="mi">相同</text><polygon points="862,305.500 876,313 862,321" fill="#0e1230"/>
<text x="555" y="352" class="mi">对象</text><polygon points="862,336.500 876,344 862,352" fill="#0e1230"/>
<text x="555" y="382" class="dis">启动全局编辑</text>
<text x="555" y="433" class="mi">存储所选对象...</text>
<text x="555" y="463" class="mi">编辑所选对象...</text>
<text x="555" y="514" class="mi" textLength="234" lengthAdjust="spacingAndGlyphs">Selection vertical lines</text>
<text x="555" y="545" class="mi" textLength="234" lengthAdjust="spacingAndGlyphs">Selection vertical lines</text>
</g>
<!-- highlighted item -->
<g filter="url(#sh2)"><rect x="513.500" y="94.500" width="390" height="47" fill="#f5584a"/></g>
<rect x="521" y="103" width="375" height="30" fill="#0a68d8"/>
<rect x="521" y="103" width="375" height="3" fill="#0a4d9e"/>
<text x="555" y="126.500" class="mi" style="fill:#fff">取消选择</text>
<path d="M830 109 L839.500 118.500 H834.500 V127 H825.500 V118.500 H820.500Z" fill="none" stroke="#fff" stroke-width="2"/><text x="843" y="127" class="sym" style="fill:#fff">⌘</text><text x="865" y="127" class="mi" style="fill:#fff">A</text>

<!-- caption -->
<g filter="url(#sh)">
<text x="295" y="1262" class="cap" textLength="80" lengthAdjust="spacingAndGlyphs">选择</text>
<text x="374" y="1262" class="cap">「</text>
<text x="412" y="1262" class="cap" textLength="80" lengthAdjust="spacingAndGlyphs">选择</text>
<text x="493" y="1262" class="cap">」</text>
<rect x="534" y="1246" width="13" height="6" fill="#fb5548" stroke="#fff" stroke-width="9" stroke-linejoin="round" paint-order="stroke"/>
<text x="543" y="1262" class="cap">「</text>
<text x="584" y="1262" class="cap" textLength="158" lengthAdjust="spacingAndGlyphs">取消选择</text>
<text x="741" y="1262" class="cap">」</text>
<text x="776" y="1262" class="cap">，</text>
<text x="816" y="1262" class="cap" textLength="354" lengthAdjust="spacingAndGlyphs">确保未选择任何内容</text>
</g>
</svg>
</body>
</html>
